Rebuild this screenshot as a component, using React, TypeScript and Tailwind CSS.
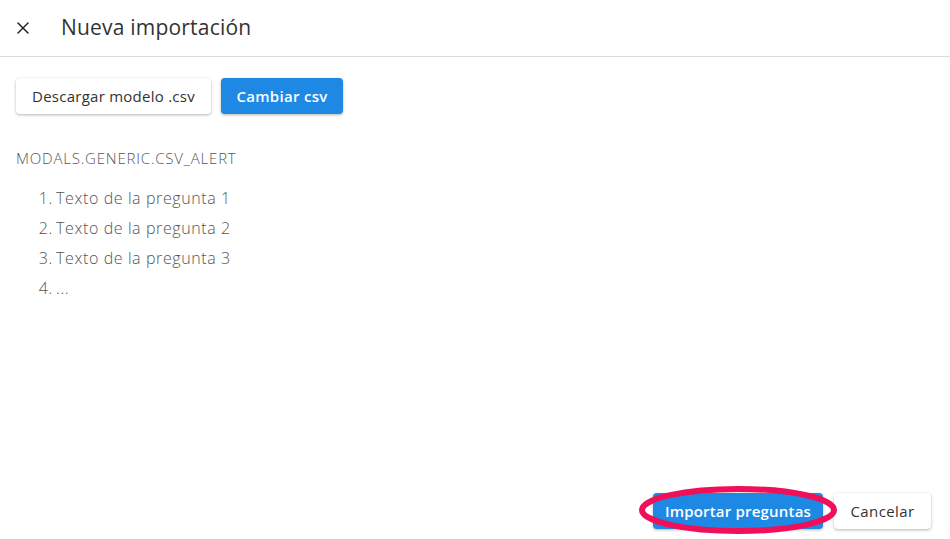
import { X } from "lucide-react";

const items = [
  "Texto de la pregunta 1",
  "Texto de la pregunta 2",
  "Texto de la pregunta 3",
  "...",
];

export default function App() {
  return (
    <div
      className="flex h-[539px] w-[950px] flex-col bg-white text-[#333]"
      style={{ fontFamily: "'Open Sans', 'Noto Sans', sans-serif" }}
    >
      {/* Header */}
      <div className="flex h-[57px] shrink-0 items-center border-b border-[#dcdcdc]">
        <button className="ml-[12px] flex h-[22px] w-[22px] items-center justify-center text-[#222]">
          <X size={20} strokeWidth={1.8} />
        </button>
        <h1 className="ml-[27px] text-[21px] font-normal tracking-[0.2px] text-[#333]">
          Nueva importación
        </h1>
      </div>

      {/* Body */}
      <div className="flex flex-1 flex-col px-4 pt-[21px]">
        <div className="flex gap-[10px]">
          <button className="h-[36px] w-[195px] rounded-[4px] bg-white text-[15px] font-medium tracking-[0.25px] text-[#333] shadow-[0_1px_3px_rgba(0,0,0,0.3)]">
            Descargar modelo .csv
          </button>
          <button className="h-[36px] w-[122px] rounded-[4px] bg-[#1e88e5] text-[15px] font-semibold tracking-[0.3px] text-white shadow-[0_1px_3px_rgba(0,0,0,0.3)]">
            Cambiar csv
          </button>
        </div>

        <p className="mt-[33px] text-[15px] font-light tracking-[0.8px] text-[#555]">
          MODALS.GENERIC.CSV_ALERT
        </p>

        <ol className="mt-[13px] flex flex-col">
          {items.map((t, i) => (
            <li
              key={i}
              className="flex h-[30px] items-center text-[16px] font-light tracking-[0.6px] text-[#555]"
            >
              <span className="w-[40px] pr-[3px] text-right">{i + 1}.</span>
              <span>{t}</span>
            </li>
          ))}
        </ol>
      </div>

      {/* Footer */}
      <div className="flex justify-end gap-[11px] pb-[10px] pr-[19px]">
        <div className="relative">
          <button className="h-[36px] w-[170px] rounded-[4px] bg-[#1e88e5] text-[15px] font-semibold tracking-[0.2px] text-white shadow-[0_1px_3px_rgba(0,0,0,0.3)]">
            Importar preguntas
          </button>
          <svg
            className="pointer-events-none absolute left-[-15px] top-[-8px]"
            width="200"
            height="50"
            viewBox="0 0 200 50"
          >
            <ellipse cx="100" cy="25" rx="96" ry="21" fill="none" stroke="#f0105a" strokeWidth="6" />
          </svg>
        </div>
        <button className="h-[36px] w-[97px] rounded-[4px] bg-white text-[15px] font-normal tracking-[0.4px] text-[#333] shadow-[0_1px_3px_rgba(0,0,0,0.3)]">
          Cancelar
        </button>
      </div>
    </div>
  );
}
